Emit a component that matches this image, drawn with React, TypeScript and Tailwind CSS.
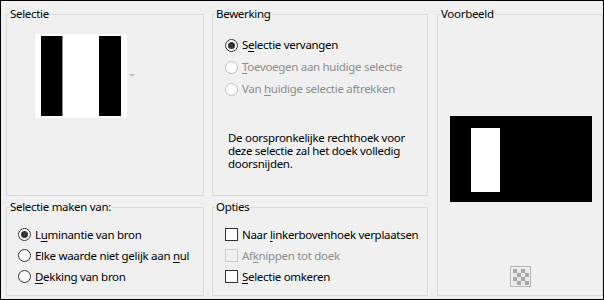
import React from 'react';

const font = { fontFamily: '"Noto Sans", "Liberation Sans", sans-serif' };

const Radio = ({ checked, disabled }: { checked?: boolean; disabled?: boolean }) => (
    <span
        className={`flex size-[13px] shrink-0 items-center justify-center rounded-full border bg-white ${
            disabled ? 'border-[#bcbcbc]' : 'border-[#333333]'
        }`}
    >
        {checked && <span className="size-[7px] rounded-full bg-[#333333]" />}
    </span>
);

const Check = ({ disabled }: { disabled?: boolean }) => (
    <span
        className={`size-[13px] shrink-0 border ${disabled ? 'border-[#cccccc] bg-[#f0f0f0]' : 'border-[#333333] bg-white'}`}
    />
);

// label with one underlined mnemonic letter
const Label = ({ pre, key_, post, disabled }: { pre: string; key_: string; post: string; disabled?: boolean }) => (
    <span className={`ml-[4px] whitespace-nowrap ${disabled ? 'text-[#8d8d8d]' : 'text-black'}`}>
        {pre}
        <span className="underline underline-offset-2">{key_}</span>
        {post}
    </span>
);

const Group = ({ title, className, children }: { title: string; className: string; children: React.ReactNode }) => (
    <fieldset className={`border border-[#dcdcdc] ${className}`}>
        <legend className="ml-[2px] px-[1px] leading-[16px] text-black">{title}</legend>
        {children}
    </fieldset>
);

const Checker = () => (
    <svg width="21" height="21" viewBox="0 0 21 21">
        <rect x="0.5" y="0.5" width="20" height="20" fill="#f0f0f0" stroke="#b4b4b4" />
        {Array.from({ length: 16 }).map((_, i) => {
            const cx = i % 4;
            const cy = Math.floor(i / 4);
            return (
                <rect
                    key={i}
                    x={3 + cx * 4}
                    y={3 + cy * 4}
                    width="4"
                    height="4"
                    fill={(cx + cy) % 2 === 0 ? '#a8a8a8' : '#e8e8e8'}
                />
            );
        })}
    </svg>
);

export default function App() {
    return (
        <div
            className="box-border flex h-[300px] w-[604px] gap-[8px] border border-black bg-[#f0f0f0] pl-[5px] pt-[5px] text-[11.5px] tracking-[-0.3px]"
            style={font}
        >
            <div className="flex w-[198px] flex-col gap-[3px]">
                <Group title="Selectie" className="h-[190px]">
                    <div className="ml-[28px] mt-[12px] flex items-center">
                        <div className="flex h-[84px] w-[92px] bg-white pl-[6px] pt-[2px]">
                            <div className="h-[80px] w-[22px] border-r border-[#8a8a8a] bg-black" />
                            <div className="w-[36px]" />
                            <div className="h-[80px] w-[22px] bg-black" />
                        </div>
                        <svg className="ml-[2px]" width="6" height="4" viewBox="0 0 6 4">
                            <path d="M0 0h6L3 3z" fill="#c0c0c0" />
                        </svg>
                    </div>
                </Group>
                <Group title="Selectie maken van:" className="h-[97px]">
                    <div className="ml-[11px] mt-[9px] flex flex-col">
                        <div className="flex h-[21px] items-center">
                            <Radio checked />
                            <Label pre="L" key_="u" post="minantie van bron" />
                        </div>
                        <div className="flex h-[21px] items-center">
                            <Radio />
                            <Label pre="Elke waarde niet gelijk aan " key_="n" post="ul" />
                        </div>
                        <div className="flex h-[21px] items-center">
                            <Radio />
                            <Label pre="" key_="D" post="ekking van bron" />
                        </div>
                    </div>
                </Group>
            </div>

            <div className="flex w-[216px] flex-col gap-[3px]">
                <Group title="Bewerking" className="h-[190px]">
                    <div className="ml-[12px] mt-[12px] flex flex-col">
                        <div className="flex h-[22px] items-center">
                            <Radio checked />
                            <Label pre="S" key_="e" post="lectie vervangen" />
                        </div>
                        <div className="flex h-[22px] items-center">
                            <Radio disabled />
                            <Label pre="" key_="T" post="oevoegen aan huidige selectie" disabled />
                        </div>
                        <div className="flex h-[22px] items-center">
                            <Radio disabled />
                            <Label pre="Van " key_="h" post="uidige selectie aftrekken" disabled />
                        </div>
                    </div>
                    <p className="ml-[15px] mt-[31px] w-[192px] leading-[13px] text-black">
                        De oorspronkelijke rechthoek voor deze selectie zal het doek volledig doorsnijden.
                    </p>
                </Group>
                <Group title="Opties" className="h-[97px]">
                    <div className="ml-[12px] mt-[9px] flex flex-col">
                        <div className="flex h-[21px] items-center">
                            <Check />
                            <Label pre="Naar " key_="l" post="inkerbovenhoek verplaatsen" />
                        </div>
                        <div className="flex h-[21px] items-center">
                            <Check disabled />
                            <Label pre="Af" key_="k" post="nippen tot doek" disabled />
                        </div>
                        <div className="flex h-[21px] items-center">
                            <Check />
                            <Label pre="" key_="S" post="electie omkeren" />
                        </div>
                    </div>
                </Group>
            </div>

            <div className="ml-[1px] w-[166px]">
                <Group title="Voorbeeld" className="flex h-[290px] flex-col">
                    <div className="ml-[12px] mt-[94px] h-[86px] w-[142px] bg-black pl-[21px] pt-[12px]">
                        <div className="h-[64px] w-[29px] bg-white" />
                    </div>
                    <div className="mt-[64px] flex justify-center">
                        <Checker />
                    </div>
                </Group>
            </div>
        </div>
    );
}
